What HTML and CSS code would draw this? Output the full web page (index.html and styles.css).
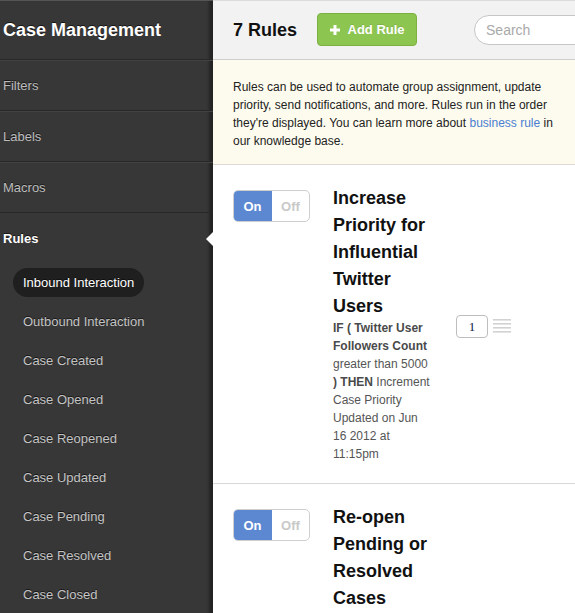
FILE: index.html
```html
<!DOCTYPE html>
<html>
<head>
<meta charset="utf-8">
<link rel="stylesheet" href="styles.css">
</head>
<body>
<div class="app">
  <aside class="sidebar">
    <div class="side-head">Case Management</div>
    <div class="side-item">Filters</div>
    <div class="side-item">Labels</div>
    <div class="side-item">Macros</div>
    <div class="side-section">
      <div class="side-title">Rules<span class="arrow"></span></div>
      <ul class="sub-list">
        <li class="sub active">Inbound Interaction</li>
        <li class="sub">Outbound Interaction</li>
        <li class="sub">Case Created</li>
        <li class="sub">Case Opened</li>
        <li class="sub">Case Reopened</li>
        <li class="sub">Case Updated</li>
        <li class="sub">Case Pending</li>
        <li class="sub">Case Resolved</li>
        <li class="sub">Case Closed</li>
      </ul>
    </div>
  </aside>
  <main class="main">
    <header class="main-head">
      <h1 class="count">7 Rules</h1>
      <button class="add-btn"><svg class="plus" width="10" height="10" viewBox="0 0 10 10"><rect x="3.5" y="0" width="3" height="10" fill="#fff"/><rect x="0" y="3.5" width="10" height="3" fill="#fff"/></svg>Add Rule</button>
      <div class="search">Search</div>
    </header>
    <div class="info">Rules can be used to automate group assignment, update priority, send notifications, and more. Rules run in the order they're displayed. You can learn more about <a class="link">business rule</a> in our knowledge base.</div>
    <div class="rule">
      <div class="toggle"><span class="on">On</span><span class="off">Off</span></div>
      <div class="rule-main">
        <h2 class="rule-title">Increase Priority for Influential Twitter Users</h2>
        <div class="rule-body">
          <p class="rule-desc"><b>IF ( Twitter User Followers Count</b> greater than 5000 <b>) THEN</b> Increment Case Priority Updated on Jun 16 2012 at 11:15pm</p>
          <div class="order">1</div>
          <svg class="handle" width="18" height="14" viewBox="0 0 18 14"><rect y="0" width="18" height="1.6" fill="#d2d2d2"/><rect y="4" width="18" height="1.6" fill="#d2d2d2"/><rect y="8" width="18" height="1.6" fill="#d2d2d2"/><rect y="12" width="18" height="1.6" fill="#d2d2d2"/></svg>
        </div>
      </div>
    </div>
    <div class="rule">
      <div class="toggle"><span class="on">On</span><span class="off">Off</span></div>
      <div class="rule-main">
        <h2 class="rule-title">Re-open Pending or Resolved Cases</h2>
      </div>
    </div>
  </main>
</div>
</body>
</html>
```

FILE: styles.css
```css
html, body {
  margin: 0;
  padding: 0;
  height: 100%;
  overflow: hidden;
}
body {
  font-family: "Liberation Sans", Arial, sans-serif;
  background: #fff;
}
.app {
  display: flex;
  height: 613px;
  width: 575px;
  overflow: hidden;
}
.sidebar {
  width: 213px;
  flex: 0 0 213px;
  background: #373737;
  box-shadow: inset -7px 0 3px -3px rgba(0,0,0,0.35);
  color: #bdbdbd;
  font-size: 13px;
  text-shadow: 0 -1px 0 rgba(0,0,0,0.6);
}
.side-head {
  height: 60px;
  box-sizing: border-box;
  padding-left: 3px;
  display: flex;
  align-items: center;
  padding-top: 1px;
  font-size: 18px;
  font-weight: bold;
  color: #fff;
  border-top: 1px solid #555;
  border-bottom: 1px solid #272727;
}
.side-item {
  height: 51px;
  box-sizing: border-box;
  padding-left: 3px;
  display: flex;
  align-items: center;
  border-bottom: 1px solid #272727;
  border-top: 1px solid #424242;
}
.side-title {
  position: relative;
  height: 51px;
  display: flex;
  align-items: center;
  padding-left: 3px;
  color: #fff;
  font-weight: bold;
}
.arrow {
  position: absolute;
  right: 0;
  top: 19px;
  width: 0;
  height: 0;
  border-top: 7px solid transparent;
  border-bottom: 7px solid transparent;
  border-right: 7px solid #fff;
}
.sub-list {
  list-style: none;
  margin: 0;
  padding: 4px 0 0 13px;
  display: flex;
  flex-direction: column;
  gap: 10px;
}
.sub {
  height: 29px;
  line-height: 29px;
  padding: 0 10px;
  color: #c4c4c4;
  align-self: flex-start;
  border-radius: 15px;
  white-space: nowrap;
}
.sub.active {
  background: #1f1f1f;
  color: #fff;
}
.main {
  flex: 1;
  min-width: 0;
  overflow: hidden;
}
.main-head {
  height: 60px;
  box-sizing: border-box;
  background: #f2f2f2;
  border-top: 1px solid #dcdcdc;
  border-bottom: 1px solid #cfcfcf;
  display: flex;
  align-items: center;
  padding-left: 20px;
}
.count {
  margin: 0;
  font-size: 18px;
  font-weight: bold;
  color: #111;
  white-space: nowrap;
  flex: 0 0 auto;
  padding-top: 1px;
}
.add-btn {
  flex: 0 0 100px;
  margin-left: 20px;
  width: 100px;
  height: 33px;
  box-sizing: border-box;
  background: #8dc551;
  border: 1px solid #7cb142;
  border-radius: 4px;
  color: #fff;
  font-family: "Liberation Sans", Arial, sans-serif;
  font-size: 13px;
  font-weight: bold;
  white-space: nowrap;
  display: flex;
  align-items: center;
  justify-content: center;
  gap: 8px;
  padding: 0;
  margin-top: -1px;
  text-shadow: 0 -1px 0 rgba(0,0,0,0.1);
}
.plus {
  margin-top: 1px;
}
.search {
  margin-left: 57px;
  flex: 0 0 140px;
  height: 30px;
  box-sizing: border-box;
  border: 1px solid #c6c6c6;
  border-radius: 15px;
  background: #fff;
  color: #a9a9a9;
  font-size: 14px;
  line-height: 28px;
  padding-left: 11px;
}
.info {
  background: #fdfbee;
  border-bottom: 1px solid #dedcd2;
  padding: 18px 20px 14px 20px;
  font-size: 12px;
  line-height: 18px;
  color: #222;
}
.link {
  color: #4a7ed2;
}
.rule {
  display: flex;
  padding: 20px 20px 20px 20px;
  border-bottom: 1px solid #d8d8d8;
}
.toggle {
  margin-top: 5px;
  display: flex;
  width: 77px;
  height: 32px;
  box-sizing: border-box;
  border: 1px solid #cfcfcf;
  border-radius: 5px;
  overflow: hidden;
  font-size: 13px;
  font-weight: bold;
  flex: 0 0 auto;
}
.toggle .on {
  width: 39px;
  background: #5c88d2;
  color: #fff;
  display: flex;
  align-items: center;
  justify-content: center;
  margin: -1px 0 -1px -1px;
}
.toggle .off {
  flex: 1;
  color: #c9c9c9;
  display: flex;
  align-items: center;
  justify-content: center;
}
.rule-main {
  margin-left: 23px;
}
.rule-title {
  margin: 0;
  width: 98px;
  font-size: 18px;
  line-height: 27px;
  font-weight: bold;
  color: #111;
}
.rule-body {
  display: flex;
  align-items: flex-start;
}
.rule-desc {
  margin: -1px 0 0 0;
  width: 98px;
  font-size: 12px;
  line-height: 18px;
  color: #555;
}
.rule-desc b {
  color: #4a4a4a;
}
.order {
  margin-left: 25px;
  width: 32px;
  height: 23px;
  box-sizing: border-box;
  border: 1px solid #bdbdbd;
  border-radius: 4px;
  font-family: "Liberation Serif", "Times New Roman", serif;
  font-size: 13px;
  line-height: 21px;
  text-align: center;
  color: #0d1a4a;
  margin-top: -5px;
}
.handle {
  margin-left: 5px;
  margin-top: -1px;
}
```
